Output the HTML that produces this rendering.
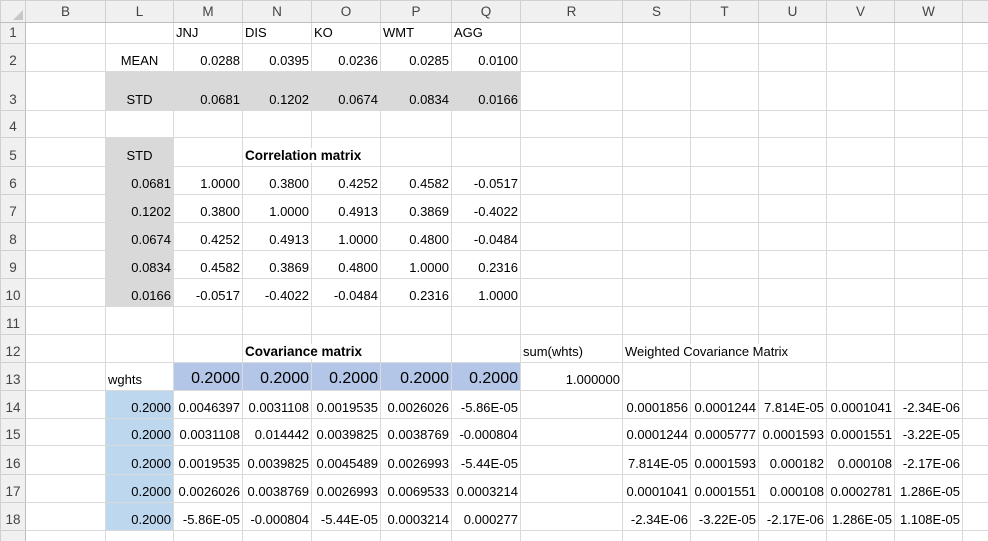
<!DOCTYPE html>
<html><head><meta charset="utf-8"><style>
html,body{margin:0;padding:0;background:#fff;width:988px;height:541px;overflow:hidden}
table{border-collapse:collapse;table-layout:fixed;width:988px;font-family:"Liberation Sans",sans-serif;font-size:13px;color:#000}
td{border:1px solid #dadada;padding:0 2px 3px 2px;vertical-align:bottom;white-space:nowrap;overflow:visible;text-align:right}
tr.h td{background:#f0f0f0;color:#444;text-align:center;vertical-align:middle;padding:0;border-color:#d0d0d0;border-bottom:1px solid #bdbdbd;font-size:13.5px}
td.n{background:#f0f0f0;color:#444;text-align:center;padding:0 0 3px 0;border-color:#d0d0d0;border-right:1px solid #bdbdbd;font-size:13.5px}
td.l{text-align:left}
td.c{text-align:center}
td.g{background:#d9d9d9}
td.b{background:#b4c6e7;font-size:16px;padding-bottom:2px}
td.lb{background:#bdd7ee}
td.bo{font-weight:bold;text-align:left;font-size:13.5px}
span.o{position:relative;z-index:2;background:#fff;padding-right:2px}
</style></head><body>
<table>
<colgroup><col style="width:25px"><col style="width:80px"><col style="width:68px"><col style="width:69px"><col style="width:69px"><col style="width:69px"><col style="width:71px"><col style="width:69px"><col style="width:102px"><col style="width:68px"><col style="width:68px"><col style="width:68px"><col style="width:68px"><col style="width:68px"><col style="width:26px"></colgroup>
<tr class="h" style="height:22px"><td style="position:relative"><span style="position:absolute;right:2px;bottom:2px;width:0;height:0;border-left:10px solid transparent;border-bottom:10px solid #c8c8c8"></span></td><td>B</td><td>L</td><td>M</td><td>N</td><td>O</td><td>P</td><td>Q</td><td>R</td><td>S</td><td>T</td><td>U</td><td>V</td><td>W</td><td></td></tr>
<tr style="height:21px"><td class="n">1</td><td></td><td></td><td class="l">JNJ</td><td class="l">DIS</td><td class="l">KO</td><td class="l">WMT</td><td class="l">AGG</td><td></td><td></td><td></td><td></td><td></td><td></td><td></td></tr>
<tr style="height:28px"><td class="n">2</td><td></td><td class="c">MEAN</td><td>0.0288</td><td>0.0395</td><td>0.0236</td><td>0.0285</td><td>0.0100</td><td></td><td></td><td></td><td></td><td></td><td></td><td></td></tr>
<tr style="height:39px"><td class="n">3</td><td></td><td class="c g">STD</td><td class="g">0.0681</td><td class="g">0.1202</td><td class="g">0.0674</td><td class="g">0.0834</td><td class="g">0.0166</td><td></td><td></td><td></td><td></td><td></td><td></td><td></td></tr>
<tr style="height:27px"><td class="n">4</td><td></td><td></td><td></td><td></td><td></td><td></td><td></td><td></td><td></td><td></td><td></td><td></td><td></td><td></td></tr>
<tr style="height:29px"><td class="n">5</td><td></td><td class="c g">STD</td><td></td><td class="bo"><span class="o">Correlation matrix</span></td><td></td><td></td><td></td><td></td><td></td><td></td><td></td><td></td><td></td><td></td></tr>
<tr style="height:28px"><td class="n">6</td><td></td><td class="g">0.0681</td><td>1.0000</td><td>0.3800</td><td>0.4252</td><td>0.4582</td><td>-0.0517</td><td></td><td></td><td></td><td></td><td></td><td></td><td></td></tr>
<tr style="height:28px"><td class="n">7</td><td></td><td class="g">0.1202</td><td>0.3800</td><td>1.0000</td><td>0.4913</td><td>0.3869</td><td>-0.4022</td><td></td><td></td><td></td><td></td><td></td><td></td><td></td></tr>
<tr style="height:28px"><td class="n">8</td><td></td><td class="g">0.0674</td><td>0.4252</td><td>0.4913</td><td>1.0000</td><td>0.4800</td><td>-0.0484</td><td></td><td></td><td></td><td></td><td></td><td></td><td></td></tr>
<tr style="height:28px"><td class="n">9</td><td></td><td class="g">0.0834</td><td>0.4582</td><td>0.3869</td><td>0.4800</td><td>1.0000</td><td>0.2316</td><td></td><td></td><td></td><td></td><td></td><td></td><td></td></tr>
<tr style="height:28px"><td class="n">10</td><td></td><td class="g">0.0166</td><td>-0.0517</td><td>-0.4022</td><td>-0.0484</td><td>0.2316</td><td>1.0000</td><td></td><td></td><td></td><td></td><td></td><td></td><td></td></tr>
<tr style="height:28px"><td class="n">11</td><td></td><td></td><td></td><td></td><td></td><td></td><td></td><td></td><td></td><td></td><td></td><td></td><td></td><td></td></tr>
<tr style="height:28px"><td class="n">12</td><td></td><td></td><td></td><td class="bo"><span class="o">Covariance matrix</span></td><td></td><td></td><td></td><td class="l"><span class="o">sum(whts)</span></td><td class="l"><span class="o">Weighted Covariance Matrix</span></td><td></td><td></td><td></td><td></td><td></td></tr>
<tr style="height:28px"><td class="n">13</td><td></td><td class="l">wghts</td><td class="b">0.2000</td><td class="b">0.2000</td><td class="b">0.2000</td><td class="b">0.2000</td><td class="b">0.2000</td><td>1.000000</td><td></td><td></td><td></td><td></td><td></td><td></td></tr>
<tr style="height:28px"><td class="n">14</td><td></td><td class="lb">0.2000</td><td>0.0046397</td><td>0.0031108</td><td>0.0019535</td><td>0.0026026</td><td>-5.86E-05</td><td></td><td>0.0001856</td><td>0.0001244</td><td>7.814E-05</td><td>0.0001041</td><td>-2.34E-06</td><td></td></tr>
<tr style="height:27px"><td class="n">15</td><td></td><td class="lb">0.2000</td><td>0.0031108</td><td>0.014442</td><td>0.0039825</td><td>0.0038769</td><td>-0.000804</td><td></td><td>0.0001244</td><td>0.0005777</td><td>0.0001593</td><td>0.0001551</td><td>-3.22E-05</td><td></td></tr>
<tr style="height:29px"><td class="n">16</td><td></td><td class="lb">0.2000</td><td>0.0019535</td><td>0.0039825</td><td>0.0045489</td><td>0.0026993</td><td>-5.44E-05</td><td></td><td>7.814E-05</td><td>0.0001593</td><td>0.000182</td><td>0.000108</td><td>-2.17E-06</td><td></td></tr>
<tr style="height:28px"><td class="n">17</td><td></td><td class="lb">0.2000</td><td>0.0026026</td><td>0.0038769</td><td>0.0026993</td><td>0.0069533</td><td>0.0003214</td><td></td><td>0.0001041</td><td>0.0001551</td><td>0.000108</td><td>0.0002781</td><td>1.286E-05</td><td></td></tr>
<tr style="height:28px"><td class="n">18</td><td></td><td class="lb">0.2000</td><td>-5.86E-05</td><td>-0.000804</td><td>-5.44E-05</td><td>0.0003214</td><td>0.000277</td><td></td><td>-2.34E-06</td><td>-3.22E-05</td><td>-2.17E-06</td><td>1.286E-05</td><td>1.108E-05</td><td></td></tr>
<tr style="height:28px"><td class="n">19</td><td></td><td></td><td></td><td></td><td></td><td></td><td></td><td></td><td></td><td></td><td></td><td></td><td></td><td></td></tr>
</table>
</body></html>
